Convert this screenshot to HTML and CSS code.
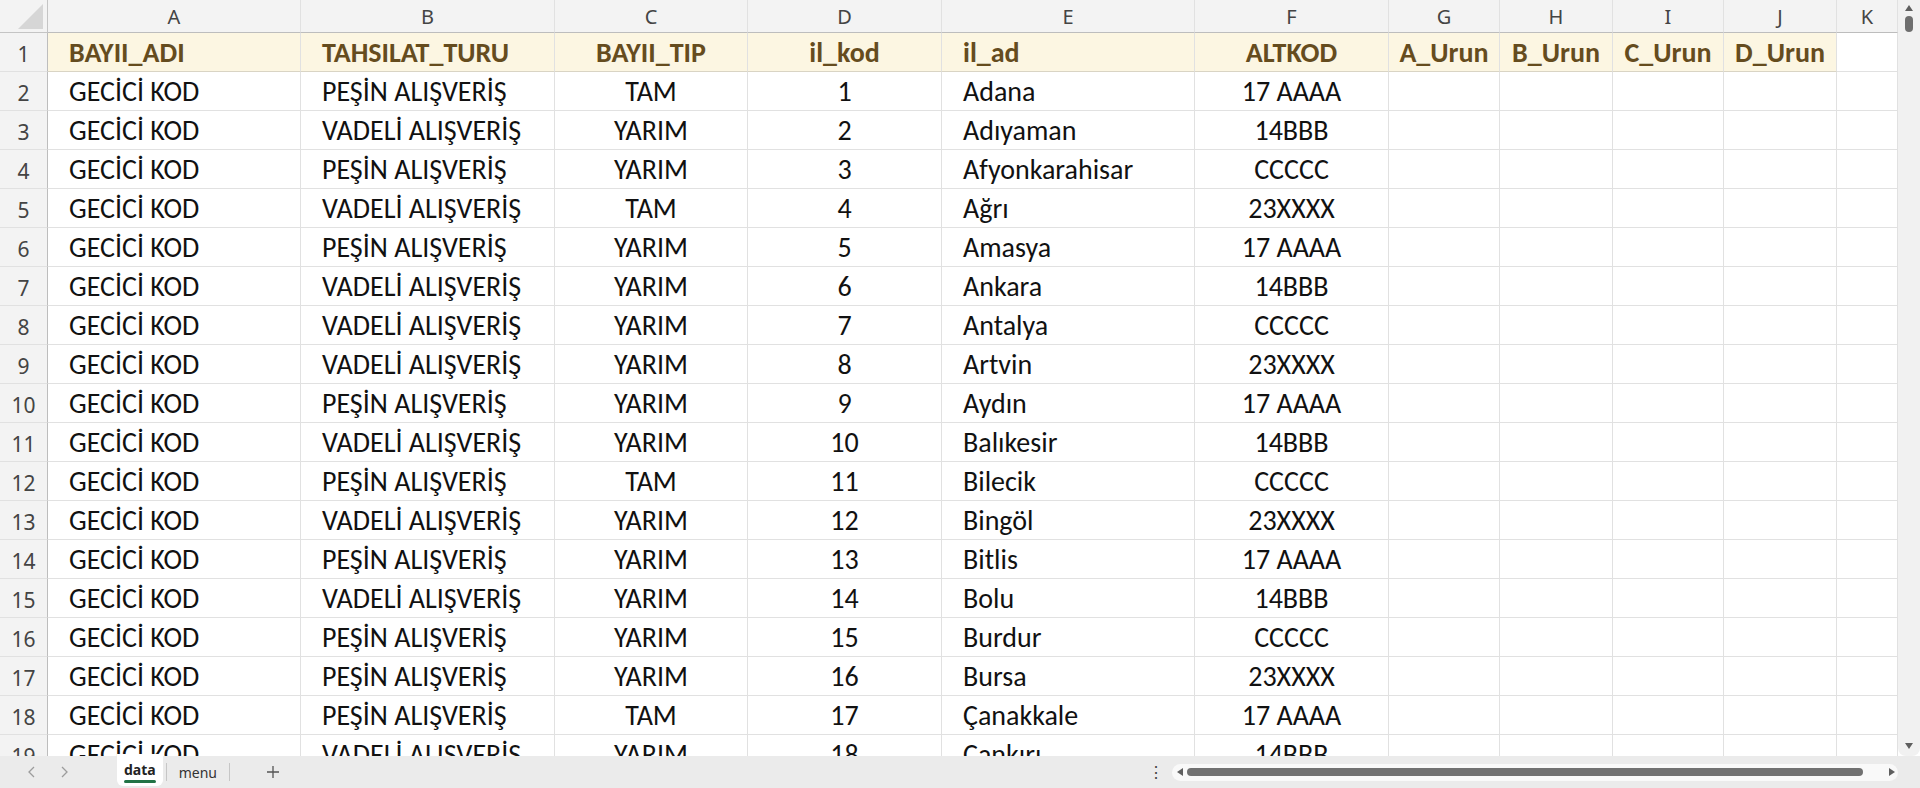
FILE: index.html
```html
<!DOCTYPE html>
<html lang="tr">
<head>
    <meta charset="UTF-8">
    <meta name="viewport" content="width=device-width, initial-scale=1.0">
    <title>data</title>
    <link rel="stylesheet" href="styles.css">
</head>
<body>

    <div class="workbook">
        <div class="sheet-area">
            <div class="sheet" id="sheet"></div>

            <div class="vscroll">
                <svg class="varrow" width="10" height="8" viewBox="0 0 10 8"><polygon points="5,1 9,7 1,7" fill="#5f5f5f"/></svg>
                <span class="vthumb"></span>
                <span class="vspace"></span>
                <svg class="varrow" width="10" height="8" viewBox="0 0 10 8"><polygon points="1,1 9,1 5,7" fill="#5f5f5f"/></svg>
            </div>
        </div>

        <footer class="tabbar">
            <div class="tabnav">
                <svg width="12" height="16" viewBox="0 0 12 16"><polyline points="8,3 3,8 8,13" fill="none" stroke="#9c9c9c" stroke-width="1.3"/></svg>
                <svg width="12" height="16" viewBox="0 0 12 16"><polyline points="4,3 9,8 4,13" fill="none" stroke="#9c9c9c" stroke-width="1.3"/></svg>
            </div>
            <div class="tabs">
                <span class="tab active">data</span>
                <span class="tab-sep"></span>
                <span class="tab">menu</span>
                <span class="tab-sep"></span>
                <span class="tab-add">
                    <svg width="14" height="14" viewBox="0 0 14 14"><path d="M7 1v12M1 7h12" stroke="#555" stroke-width="1.3"/></svg>
                </span>
            </div>
            <div class="hscroll-wrap">
                <span class="more">⋮</span>
                <div class="hscroll">
                    <svg width="8" height="10" viewBox="0 0 8 10"><polygon points="1,5 7,1 7,9" fill="#5f5f5f"/></svg>
                    <span class="hthumb"></span>
                    <svg width="8" height="10" viewBox="0 0 8 10"><polygon points="7,5 1,1 1,9" fill="#5f5f5f"/></svg>
                </div>
            </div>
        </footer>
    </div>

    <script>
        const columns = ['A', 'B', 'C', 'D', 'E', 'F', 'G', 'H', 'I', 'J', 'K'];
        const headers = ['BAYII_ADI', 'TAHSILAT_TURU', 'BAYII_TIP', 'il_kod', 'il_ad', 'ALTKOD', 'A_Urun', 'B_Urun', 'C_Urun', 'D_Urun'];
        // alignment per column: l = left, c = center
        const align = ['l', 'l', 'c', 'c', 'l', 'c', 'c', 'c', 'c', 'c', 'c'];

        const rows = [
            ['PEŞİN', 'TAM', 'Adana', '17 AAAA'],
            ['VADELİ', 'YARIM', 'Adıyaman', '14BBB'],
            ['PEŞİN', 'YARIM', 'Afyonkarahisar', 'CCCCC'],
            ['VADELİ', 'TAM', 'Ağrı', '23XXXX'],
            ['PEŞİN', 'YARIM', 'Amasya', '17 AAAA'],
            ['VADELİ', 'YARIM', 'Ankara', '14BBB'],
            ['VADELİ', 'YARIM', 'Antalya', 'CCCCC'],
            ['VADELİ', 'YARIM', 'Artvin', '23XXXX'],
            ['PEŞİN', 'YARIM', 'Aydın', '17 AAAA'],
            ['VADELİ', 'YARIM', 'Balıkesir', '14BBB'],
            ['PEŞİN', 'TAM', 'Bilecik', 'CCCCC'],
            ['VADELİ', 'YARIM', 'Bingöl', '23XXXX'],
            ['PEŞİN', 'YARIM', 'Bitlis', '17 AAAA'],
            ['VADELİ', 'YARIM', 'Bolu', '14BBB'],
            ['PEŞİN', 'YARIM', 'Burdur', 'CCCCC'],
            ['PEŞİN', 'YARIM', 'Bursa', '23XXXX'],
            ['PEŞİN', 'TAM', 'Çanakkale', '17 AAAA'],
            ['VADELİ', 'YARIM', 'Çankırı', '14BBB']
        ];

        function addCell(sheet, cls, text) {
            const cell = document.createElement('div');
            cell.className = cls;
            if (text !== undefined) cell.textContent = text;
            sheet.appendChild(cell);
            return cell;
        }

        function buildSheet() {
            const sheet = document.getElementById('sheet');

            // column letters
            const corner = addCell(sheet, 'corner');
            corner.innerHTML = '<svg width="25" height="25" viewBox="0 0 25 25"><polygon points="25,0 25,25 0,25" fill="#d6d6d6"/></svg>';
            columns.forEach(col => addCell(sheet, 'colhead', col));

            // header row
            addCell(sheet, 'rowhead', 1);
            columns.forEach((col, i) => {
                const text = headers[i];
                const cls = text ? 'cell hdr ' + align[i] : 'cell';
                addCell(sheet, cls, text);
            });

            // data rows
            rows.forEach((r, idx) => {
                const values = ['GECİCİ KOD', r[0] + ' ALIŞVERİŞ', r[1], idx + 1, r[2], r[3]];
                addCell(sheet, 'rowhead', idx + 2);
                columns.forEach((col, i) => {
                    addCell(sheet, 'cell ' + align[i], values[i]);
                });
            });
        }

        buildSheet();
    </script>

</body>
</html>
```

FILE: styles.css
```css
body {
    margin: 0;
    padding: 0;
    background-color: #fff;
    font-family: 'Carlito', 'Lato', sans-serif;
    color: #000;
    overflow: hidden;
}

.workbook {
    width: 1920px;
    height: 788px;
    display: flex;
    flex-direction: column;
}

.sheet-area {
    height: 756px;
    display: flex;
    overflow: hidden;
}

.sheet {
    flex: 1;
    display: grid;
    grid-template-columns: 48px 253px 254px 193px 194px 253px 194px 111px 113px 111px 113px 61px;
    grid-template-rows: 33px;
    grid-auto-rows: 39px;
    overflow: hidden;
}

.corner {
    background-color: #f3f3f3;
    border-right: 1px solid #c4c4c4;
    border-bottom: 1px solid #c4c4c4;
    padding: 5px 4px 3px 0;
    display: flex;
    justify-content: flex-end;
    align-items: flex-end;
    box-sizing: border-box;
}

.colhead {
    background-color: #f3f3f3;
    border-right: 1px solid #e1e1e1;
    border-bottom: 1px solid #bdbdbd;
    box-sizing: border-box;
    text-align: center;
    font-family: 'Noto Sans', 'Open Sans', sans-serif;
    font-size: 20px;
    line-height: 34px;
    color: #444;
}

.rowhead {
    background-color: #f3f3f3;
    border-right: 1px solid #bdbdbd;
    border-bottom: 1px solid #e1e1e1;
    box-sizing: border-box;
    text-align: center;
    font-family: 'Noto Sans', 'Open Sans', sans-serif;
    font-size: 21px;
    line-height: 42px;
    color: #444;
}

.cell {
    border-right: 1px solid #e1e1e1;
    border-bottom: 1px solid #e1e1e1;
    box-sizing: border-box;
    font-size: 28px;
    line-height: 40px;
    white-space: nowrap;
    overflow: hidden;
    color: #111;
}

.cell.l {
    padding-left: 21px;
}

.cell.c {
    text-align: center;
}

.cell.hdr {
    background-color: #fcf6e2;
    color: #654c1e;
    font-weight: bold;
    border-bottom-color: #d9d4c4;
}

/* scrollbars */
.vscroll {
    width: 22px;
    background-color: #f1f1f1;
    display: flex;
    flex-direction: column;
    align-items: center;
    padding: 4px 0 6px;
    box-sizing: border-box;
    border-bottom-left-radius: 8px;
    border-bottom-right-radius: 8px;
}

.varrow {
    flex: none;
}

.vthumb {
    width: 8px;
    height: 16px;
    margin-top: 4px;
    border-radius: 4px;
    background-color: #6e6e6e;
}

.vspace {
    flex: 1;
}

.tabbar {
    height: 32px;
    background-color: #ebebeb;
    display: flex;
    align-items: stretch;
    font-family: 'Noto Sans', 'Open Sans', sans-serif;
    color: #333;
}

.tabnav {
    width: 112px;
    display: flex;
    align-items: center;
    gap: 20px;
    padding-left: 26px;
    box-sizing: border-box;
}

.tabs {
    display: flex;
    align-items: center;
    padding-left: 5px;
}

.tab {
    font-size: 14px;
    padding: 0 8px;
    height: 100%;
    display: flex;
    align-items: center;
    box-sizing: border-box;
    margin: 0 4px;
    color: #333;
}

.tab.active {
    background-color: #fff;
    font-weight: bold;
    color: #222;
    border-bottom-left-radius: 6px;
    border-bottom-right-radius: 6px;
    margin: 0 3px 5px 0;
    padding: 0 7px;
    position: relative;
}

.tab.active::after {
    content: '';
    position: absolute;
    left: 7px;
    right: 7px;
    bottom: 3px;
    height: 3px;
    border-radius: 2px;
    background-color: #217346;
}

.tab-sep {
    width: 1px;
    height: 18px;
    background-color: #c6c6c6;
}

.tab-add {
    display: flex;
    align-items: center;
    margin-left: 36px;
}

.hscroll-wrap {
    margin-left: auto;
    display: flex;
    align-items: center;
    width: 775px;
}

.more {
    width: 22px;
    text-align: center;
    font-size: 16px;
    color: #444;
    margin-right: 5px;
}

.hscroll {
    flex: 1;
    height: 17px;
    background-color: #f9f9f9;
    border-radius: 9px;
    display: flex;
    align-items: center;
    padding: 0 2px 0 4px;
    gap: 3px;
    margin-right: 22px;
}

.hthumb {
    flex: 1;
    height: 8px;
    border-radius: 4px;
    background-color: #717171;
    margin-right: 22px;
}
```
